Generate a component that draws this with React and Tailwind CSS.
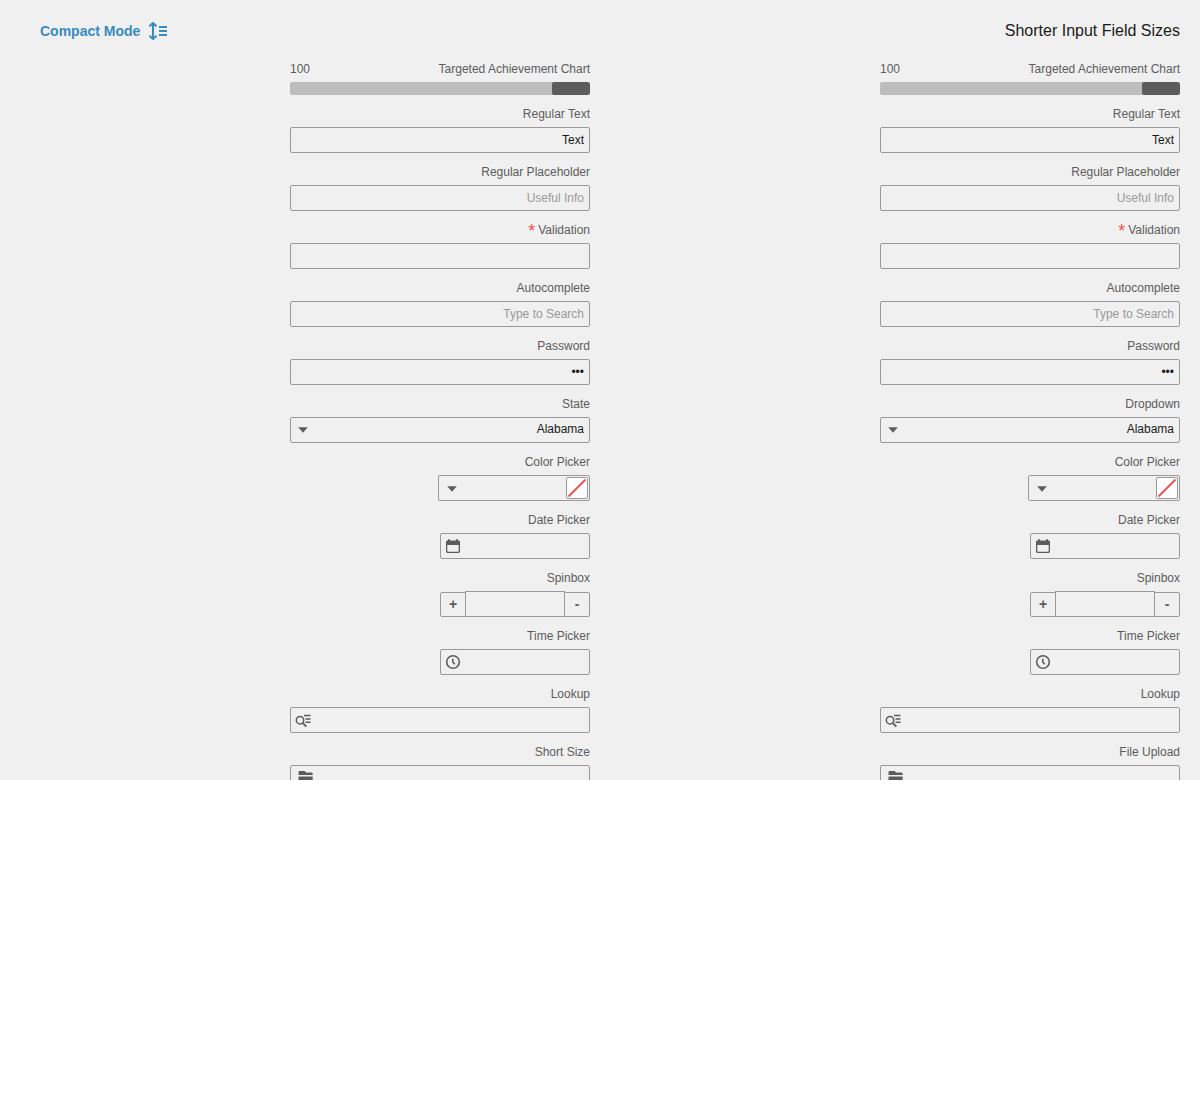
import { useId } from "react";

const frame = "h-[26px] rounded-xs border border-[#999] bg-transparent";
const innerInput = "min-w-0 flex-1 bg-transparent px-[5px] text-right outline-none";

function CompactIcon() {
  return (
    <svg width="20" height="20" viewBox="0 0 20 20" fill="none" stroke="currentColor" strokeWidth="2" strokeLinecap="round" strokeLinejoin="round" aria-hidden="true">
      <path d="M5 2.2v15.6M2 4.800 5 2l3 2.800M2 15.200 5 18l3-2.800" />
      <path d="M11 6h8M11 10h8M11 14h8" strokeLinecap="butt" />
    </svg>
  );
}

function CaretIcon() {
  return (
    <svg width="16" height="16" viewBox="0 0 16 16" fill="currentColor" aria-hidden="true">
      <path d="M3.2 5.2h9.600L8 10.800z" />
    </svg>
  );
}

function CalendarIcon() {
  return (
    <svg width="16" height="16" viewBox="0 0 16 16" fill="currentColor" fillRule="evenodd" aria-hidden="true">
      <path d="M3 1.200h2v1.300h6V1.200h2v1.300h.6A1.400 1.400 0 0 1 15 3.900v9.700a1.400 1.400 0 0 1-1.400 1.400H2.400A1.400 1.400 0 0 1 1 13.600V3.900a1.400 1.400 0 0 1 1.400-1.400H3zM2.300 7v6q0 .7.700.7h10q.7 0 .7-.7V7z" />
    </svg>
  );
}

function ClockIcon() {
  return (
    <svg width="16" height="16" viewBox="0 0 16 16" fill="none" stroke="currentColor" strokeWidth="1.6" aria-hidden="true">
      <circle cx="8" cy="8" r="6.3" />
      <path d="M7.800 4.800V8l2 2.200" />
    </svg>
  );
}

function LookupIcon() {
  return (
    <svg width="16" height="16" viewBox="0 0 16 16" fill="none" stroke="currentColor" strokeWidth="1.5" aria-hidden="true">
      <circle cx="5" cy="8.200" r="3.700" />
      <path d="M7.600 10.800l3.700 3.900" strokeWidth="1.800" />
      <path d="M9 3.600h6.500M10.500 6.900h5M10.500 10.200h5" />
    </svg>
  );
}

function FolderIcon() {
  return (
    <svg width="16" height="16" viewBox="0 0 16 16" fill="currentColor" aria-hidden="true">
      <path d="M.5 5V2.200Q.5 1 1.700 1h5Q7.500 1 7.700 2.500h5.800q1.200 0 1.200 1.200V5z" />
      <path d="M.5 6.500h14.200v6.300q0 1.200-1.200 1.200H1.700q-1.200 0-1.200-1.200z" />
    </svg>
  );
}

function Field({ label, htmlFor, required, children }) {
  return (
    <div className="flex flex-col items-end gap-[5px]">
      <label htmlFor={htmlFor} className="flex h-4 items-center gap-[3px]">
        {required && <span className="h-4 text-lg leading-[18px] text-[#ef5350]">*</span>}
        {label}
      </label>
      {children}
    </div>
  );
}

function TextField({ label, required, type = "text", ...rest }) {
  const id = useId();
  return (
    <Field label={label} htmlFor={id} required={required}>
      <input
        id={id}
        type={type}
        required={required}
        className={`${frame} w-full px-[5px] text-right text-[#1a1a1a] outline-none placeholder:text-[#999]`}
        {...rest}
      />
    </Field>
  );
}

function IconField({ label, icon, action, width, inset = "pl-1" }) {
  const id = useId();
  return (
    <Field label={label} htmlFor={id}>
      <div className={`${frame} ${width} ${inset} flex items-center`}>
        <button type="button" aria-label={action}>{icon}</button>
        <input id={id} type="text" className={innerInput} />
      </div>
    </Field>
  );
}

function SelectField({ label }) {
  const id = useId();
  return (
    <Field label={label} htmlFor={id}>
      <div className="relative w-full">
        <select
          id={id}
          defaultValue="Alabama"
          className={`${frame} block w-full appearance-none pr-[5px] pb-0.5 pl-6 text-right text-[#1a1a1a] outline-none`}
        >
          <option>Alabama</option>
          <option>Alaska</option>
          <option>Arizona</option>
        </select>
        <span className="pointer-events-none absolute inset-y-0 left-[5px] flex items-center">
          <CaretIcon />
        </span>
      </div>
    </Field>
  );
}

function ColorField() {
  const id = useId();
  return (
    <Field label="Color Picker" htmlFor={id}>
      <div className={`${frame} flex w-[152px] items-center pr-px pl-[5px]`}>
        <button type="button" aria-label="Open palette" className="pt-0.5"><CaretIcon /></button>
        <input id={id} type="text" className={innerInput} />
        <button type="button" aria-label="No color" className="size-[22px] rounded-xs border border-[#999] bg-white">
          <svg width="20" height="20" viewBox="0 0 20 20" stroke="#ef5350" strokeWidth="2" aria-hidden="true">
            <path d="M1.500 18.500l17-17" />
          </svg>
        </button>
      </div>
    </Field>
  );
}

function Spinbox() {
  const id = useId();
  const button = "h-[25px] w-[26px] border border-[#999] pb-0.5 text-sm font-bold leading-4";
  return (
    <Field label="Spinbox" htmlFor={id}>
      <div className="flex h-[26px] items-end">
        <button type="button" className={`${button} rounded-l-xs`}>+</button>
        <input
          id={id}
          type="text"
          className="-mx-px h-[26px] w-[100px] border border-[#999] bg-transparent px-[5px] text-right outline-none"
        />
        <button type="button" className={`${button} rounded-r-xs`}>-</button>
      </div>
    </Field>
  );
}

function Chart({ value, share }) {
  return (
    <div className="flex flex-col gap-[5px]">
      <div className="flex h-4 items-center justify-between">
        <span>{value}</span>
        <span>Targeted Achievement Chart</span>
      </div>
      <div className="flex h-[13px] justify-end overflow-hidden rounded-xs bg-[#bdbdbd]">
        <div className="rounded-xs bg-[#5c5c5c]" style={{ width: `${share}%` }} />
      </div>
    </div>
  );
}

function FormColumn({ selectLabel, uploadLabel }) {
  return (
    <form className="flex w-[300px] flex-col gap-[11px] justify-self-end">
      <Chart value={100} share={12.7} />
      <TextField label="Regular Text" defaultValue="Text" />
      <TextField label="Regular Placeholder" placeholder="Useful Info" />
      <TextField label="Validation" required />
      <TextField label="Autocomplete" placeholder="Type to Search" />
      <TextField label="Password" type="password" defaultValue="abc" autoComplete="off" />
      <SelectField label={selectLabel} />
      <ColorField />
      <IconField label="Date Picker" icon={<CalendarIcon />} action="Open calendar" width="w-[150px]" />
      <Spinbox />
      <IconField label="Time Picker" icon={<ClockIcon />} action="Choose a time" width="w-[150px]" />
      <IconField label="Lookup" icon={<LookupIcon />} action="Look up" width="w-full" />
      <IconField label={uploadLabel} icon={<FolderIcon />} action="Browse files" width="w-full" inset="pl-[7px]" />
    </form>
  );
}

export default function App() {
  return (
    <main className="max-h-[780px] overflow-hidden bg-[#f0f0f0] pr-5 font-['Liberation_Sans',Arial,sans-serif] text-xs leading-4 text-[#5c5c5c] [&_button]:flex [&_button]:items-center [&_button]:justify-center">
      <header className="flex h-[61px] items-center justify-between pl-10">
        <button type="button" className="gap-2 text-sm font-bold text-[#388bc1]">
          Compact Mode
          <CompactIcon />
        </button>
        <h1 className="text-base text-[#1a1a1a]">Shorter Input Field Sizes</h1>
      </header>
      <div className="grid grid-cols-2">
        <FormColumn selectLabel="State" uploadLabel="Short Size" />
        <FormColumn selectLabel="Dropdown" uploadLabel="File Upload" />
      </div>
    </main>
  );
}
